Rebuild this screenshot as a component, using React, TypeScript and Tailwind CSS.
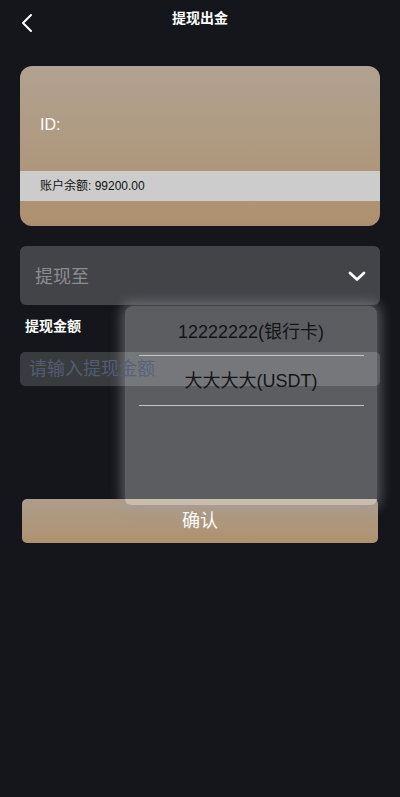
import React from "react";

const font = { fontFamily: '"Liberation Sans", "Noto Sans CJK SC", sans-serif' };

export default function App() {
  return (
    <div className="relative w-[400px] h-[797px] bg-[#15161b] overflow-hidden" style={font}>
      {/* header */}
      <div className="relative h-[40px] flex items-start justify-center">
        <svg className="absolute left-[20px] top-[13px]" width="14" height="20" viewBox="0 0 14 20" fill="none">
          <path d="M11 2 L3 10 L11 18" stroke="#ffffff" strokeWidth="2" strokeLinecap="round" strokeLinejoin="round" />
        </svg>
        <div className="mt-[9px] text-[14px] leading-[18px] font-bold text-white">提现出金</div>
      </div>

      {/* card */}
      <div className="mx-[20px] mt-[26px] h-[160px] rounded-[12px] overflow-hidden flex flex-col bg-gradient-to-b from-[#b1a291] to-[#ad906f]">
        <div className="h-[105px] flex items-center pl-[20px] pt-[12px] text-white text-[16px]">ID:</div>
        <div className="h-[30px] bg-[#cccccc] flex items-center pl-[20px] text-[12px] text-[#111111]">账户余额: 99200.00</div>
        <div className="flex-1" />
      </div>

      {/* select */}
      <div className="mx-[20px] mt-[20px] h-[59px] rounded-[6px] bg-[#434448] flex items-center justify-between pl-[15px] pr-[14px]">
        <span className="text-[18px] text-[#8c8c90] pt-[4px]">提现至</span>
        <svg width="18" height="12" viewBox="0 0 18 12" fill="none">
          <path d="M2 3 L9 9.5 L16 3" stroke="#ffffff" strokeWidth="2.8" strokeLinecap="round" strokeLinejoin="round" />
        </svg>
      </div>

      {/* label */}
      <div className="mt-[12px] ml-[25px] text-[14px] leading-[18px] font-bold text-white">提现金额</div>

      {/* dropdown background */}
      <div className="absolute left-[125px] top-[306px] w-[252px] h-[199px] rounded-[8px] bg-[#5c5d61] shadow-[0_0_12px_4px_rgba(160,160,165,0.45)] z-10 flex flex-col justify-end">
        <div className="h-[6px] rounded-b-[8px] bg-[#c9bdb0]" />
      </div>
      {/* dropdown content */}
      <div className="absolute left-[125px] top-[306px] w-[252px] pt-[1px] flex flex-col items-center z-30">
        <div className="w-[225px] h-[49px] flex items-center justify-center border-b border-[#c4c4c6] text-[18px] text-[#141414] pt-[2px]">12222222(银行卡)</div>
        <div className="w-[225px] h-[50px] flex items-center justify-center border-b border-[#c4c4c6] text-[18px] text-[#141414] pt-[2px]">大大大大(USDT)</div>
      </div>

      {/* input */}
      <div className="relative z-20 mx-[20px] mt-[17px] h-[34px] rounded-[5px] bg-[rgba(255,255,255,0.16)] flex items-center pl-[9px]">
        <span className="text-[18px] text-[#52617a]/90">请输入提现金额</span>
      </div>

      {/* button */}
      <div className="relative z-0 mx-[22px] mt-[113px] h-[44px] rounded-[5px] bg-gradient-to-b from-[#ad9d8b] to-[#ae926f] flex items-center justify-center text-white text-[18px]">
        确认
      </div>
    </div>
  );
}
